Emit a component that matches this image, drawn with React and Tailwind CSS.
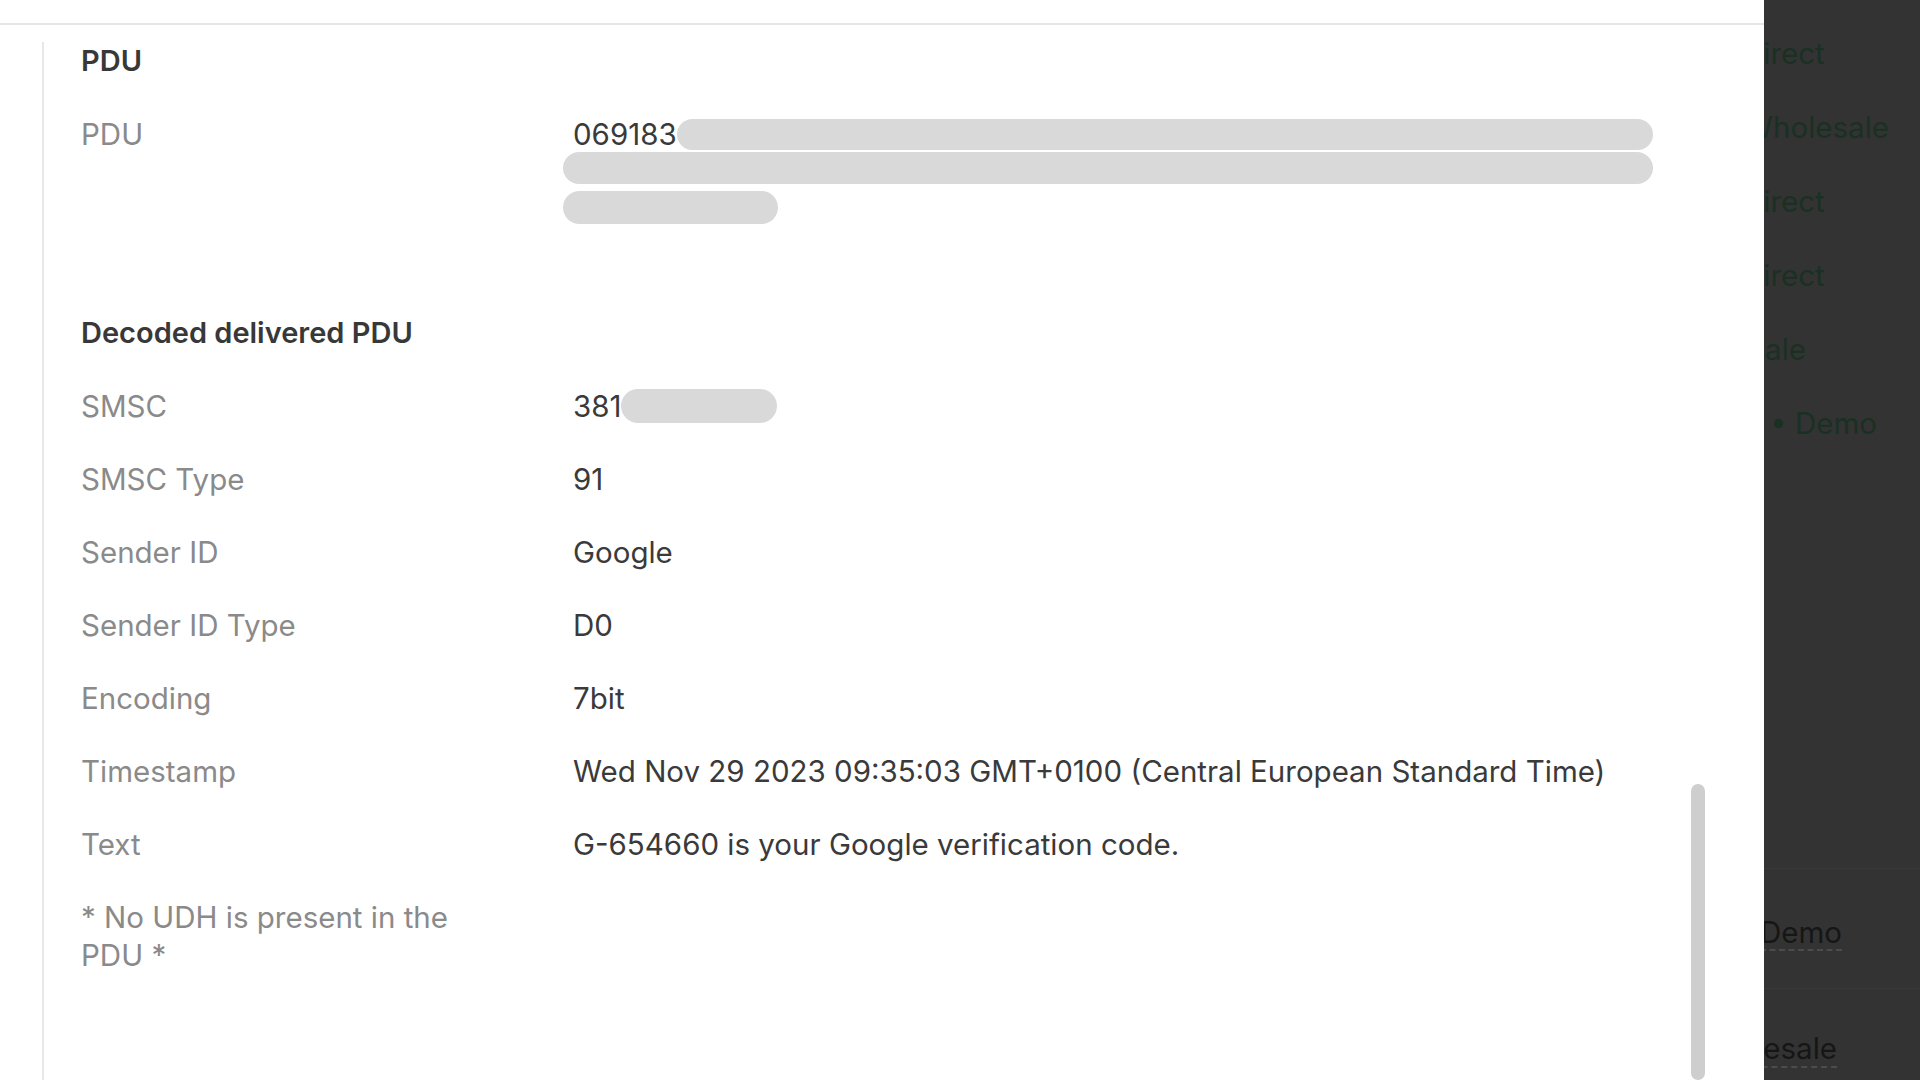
import React from "react";

const Redacted = ({ className = "" }) => (
  <span className={`block rounded-full bg-[#d9d9d9] ${className}`} />
);

const Row = ({ label, children }) => (
  <div className="grid grid-cols-[400px_1fr] gap-x-[92px]">
    <div className="text-[#8a8a8a]">{label}</div>
    <div className="text-[#3a3a3a]">{children}</div>
  </div>
);

const App = () => {
  const decoded = [
    ["SMSC Type", "91"],
    ["Sender ID", "Google"],
    ["Sender ID Type", "D0"],
    ["Encoding", "7bit"],
    ["Timestamp", "Wed Nov 29 2023 09:35:03 GMT+0100 (Central European Standard Time)"],
    ["Text", "G-654660 is your Google verification code."],
  ];

  return (
    <div className="flex w-[1920px] h-[1080px] overflow-hidden font-['Inter','Liberation_Sans',sans-serif] text-[29.5px] leading-[38px]">
      {/* Drawer */}
      <div className="flex flex-col w-[1764px] bg-white">
        <div className="h-[25px] shrink-0 border-b-2 border-[#e6e6e6]" />
        <div className="flex flex-1 pt-[17px] min-h-0">
          <div className="ml-[42px] border-l-2 border-[#e8e8e8] flex-1 pl-[37px]">
            {/* PDU */}
            <div className="flex flex-col gap-[35px]">
              <h3 className="font-semibold text-[29px] text-[#383838]">PDU</h3>
              <Row label="PDU">
                <div className="flex flex-col">
                  <div className="flex items-center w-[1080px]">
                    <span>069183</span>
                    <Redacted className="flex-1 h-[31px]" />
                  </div>
                  <Redacted className="-ml-[10px] mt-[-1px] w-[1090px] h-[32px]" />
                  <Redacted className="-ml-[10px] mt-[7px] w-[215px] h-[33px]" />
                </div>
              </Row>
            </div>

            {/* Decoded */}
            <div className="flex flex-col gap-[35px] mt-[90px]">
              <h3 className="font-semibold text-[29px] text-[#383838]">Decoded delivered PDU</h3>
              <Row label="SMSC">
                <div className="flex items-center">
                  <span>381</span>
                  <Redacted className="w-[156px] h-[34px]" />
                </div>
              </Row>
              {decoded.map(([label, value]) => (
                <Row key={label} label={label}>
                  {value}
                </Row>
              ))}
              <Row label="* No UDH is present in the PDU *" />
            </div>
          </div>
          <div className="w-[14px] mr-[59px] pt-[742px] shrink-0">
            <div className="h-full rounded-full bg-[#cecece]" />
          </div>
        </div>
      </div>

      {/* Page behind the overlay */}
      <div className="flex-1 bg-[#333333] overflow-hidden flex flex-col whitespace-nowrap text-[#1a3023]">
        <div className="flex flex-col gap-[36px] pt-[34px]">
          <div className="-ml-[22px]">Direct</div>
          <div className="-ml-[20px]">Wholesale</div>
          <div className="-ml-[22px]">Direct</div>
          <div className="-ml-[22px]">Direct</div>
          <div className="-ml-[103px]">Wholesale</div>
          <div className="pl-[6px]">• Demo</div>
        </div>
        <div className="mt-[426px] border-t border-[#393939] h-[120px] flex items-end pb-[37px] text-[#161616]">
          <span className="-ml-[4px] border-b-2 border-dashed border-[#4c4c4c] leading-[34px]">Demo</span>
        </div>
        <div className="border-t border-[#393939] flex-1 pt-[40px] text-[#161616]">
          <span className="-ml-[72px] border-b-2 border-dashed border-[#4c4c4c]">Wholesale</span>
        </div>
      </div>
    </div>
  );
};

export default App;
